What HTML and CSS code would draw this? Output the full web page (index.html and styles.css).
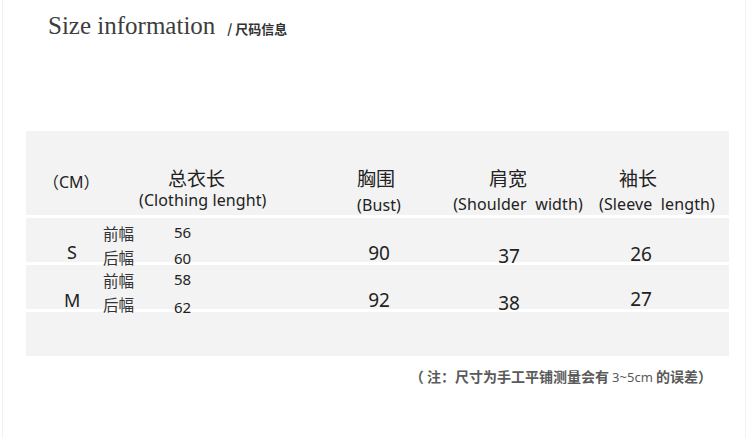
FILE: index.html
```html
<!DOCTYPE html>
<html lang="zh">
<head>
<meta charset="utf-8">
<title>Size information</title>
<link rel="stylesheet" href="styles.css">
</head>
<body>
<div class="page">
  <header class="title">
    <span class="title-en">Size information</span>
    <span class="title-cn">/ 尺码信息</span>
  </header>

  <section class="panel">
    <div class="row row-head">
      <div class="cell unit">（CM）</div>
      <div class="cell head head-length">
        <span class="cn">总衣长</span>
        <span class="en">(Clothing lenght)</span>
      </div>
      <div class="cell head head-bust">
        <span class="cn">胸围</span>
        <span class="en">(Bust)</span>
      </div>
      <div class="cell head head-center head-shoulder">
        <span class="cn">肩宽</span>
        <span class="en">(Shoulder&nbsp; width)</span>
      </div>
      <div class="cell head head-center head-sleeve">
        <span class="cn">袖长</span>
        <span class="en">(Sleeve&nbsp; length)</span>
      </div>
    </div>

    <div class="row">
      <div class="cell size size-s">S</div>
      <div class="cell labels"><span>前幅</span><span>后幅</span></div>
      <div class="cell pair"><span>56</span><span>60</span></div>
      <div class="cell num bust">90</div>
      <div class="cell num shoulder low">37</div>
      <div class="cell num sleeve mid">26</div>
      <div class="cell"></div>
    </div>

    <div class="row">
      <div class="cell size size-m">M</div>
      <div class="cell labels"><span>前幅</span><span>后幅</span></div>
      <div class="cell pair"><span>58</span><span class="drop">62</span></div>
      <div class="cell num bust">92</div>
      <div class="cell num shoulder low">38</div>
      <div class="cell num sleeve high">27</div>
      <div class="cell"></div>
    </div>

    <div class="row row-empty"></div>
  </section>

  <p class="note">（ 注：尺寸为手工平铺测量会有 <span class="note-num">3~5cm</span> 的误差）</p>
</div>
</body>
</html>
```

FILE: styles.css
```css
html, body {
  margin: 0;
  padding: 0;
  background: #ffffff;
}

body {
  width: 750px;
  height: 438px;
  overflow: hidden;
  font-family: "Noto Sans", "Noto Sans CJK SC", sans-serif;
  color: #222;
}

.page {
  height: 438px;
  box-sizing: border-box;
  margin-left: 2px;
  width: 744px;
  border-left: 1px solid #f1f1f1;
  border-right: 1px solid #f1f1f1;
  padding: 11px 0 0 23px;
}

.title {
  display: flex;
  align-items: baseline;
  gap: 12px;
  height: 120px;
  padding-left: 22px;
}

.title-en {
  font-family: "Liberation Serif", "DejaVu Serif", serif;
  font-size: 25px;
  color: #3d3d3d;
  line-height: 30px;
}

.title-cn {
  font-family: "Noto Sans CJK SC", sans-serif;
  font-weight: 700;
  font-size: 13px;
  color: #333;
}

.panel {
  width: 703px;
  display: flex;
  flex-direction: column;
  gap: 3px;
}

.row {
  display: grid;
  grid-template-columns: 74px 66px 154px 120px 138px 126px 1fr;
  height: 44px;
  background: #f3f3f3;
}

.row-head {
  height: 84px;
}

.cell {
  white-space: nowrap;
  position: relative;
  z-index: 1;
}

/* header */
.unit {
  font-size: 16px;
  padding: 41px 0 0 17px;
  line-height: 20px;
  color: #222;
}

.head {
  display: flex;
  flex-direction: column;
}

.head .cn {
  font-family: "Noto Sans CJK SC", sans-serif;
  font-size: 19px;
  line-height: 24px;
}

.head .en {
  font-size: 16px;
  line-height: 20px;
  letter-spacing: 0.1px;
}

.head-length {
  grid-column: 2 / 4;
  align-items: flex-start;
  padding: 35px 0 0 39px;
}

.head-length .cn {
  margin-left: 29px;
}

.head-bust {
  padding: 35px 0 0 37px;
}

.head-bust .en {
  margin-top: 5px;
}

.head-center {
  align-items: center;
  padding-top: 35px;
}

.head-center .en {
  margin-top: 4px;
}

.head-shoulder {
  transform: translateX(9px);
}

.head-shoulder .cn {
  margin-right: 20px;
}

.head-sleeve {
  transform: translateX(16px);
}

.head-sleeve .cn {
  margin-right: 38px;
}

/* body rows */
.size {
  font-size: 18px;
  line-height: 24px;
  padding-top: 22px;
}

.size-s {
  padding-left: 41px;
}

.size-m {
  padding-left: 38px;
  padding-top: 23px;
}

.labels {
  display: flex;
  flex-direction: column;
  padding: 3px 0 0 3px;
  font-family: "Noto Sans CJK SC", sans-serif;
  font-size: 15.5px;
  line-height: 24px;
  color: #333;
}

.pair {
  display: flex;
  flex-direction: column;
  padding: 1px 0 0 8px;
  font-size: 15px;
  line-height: 26px;
}

.pair .drop {
  position: relative;
  top: 2px;
}

.num {
  text-align: center;
  font-size: 19px;
  line-height: 24px;
  padding-top: 23px;
}

.num.low {
  padding-top: 26px;
}

.num.mid {
  padding-top: 24px;
}

.num.high {
  padding-top: 22px;
}

.bust {
  padding-right: 12px;
  padding-left: 10px;
}

.row-empty {
  height: 44px;
}

.note {
  margin: 0;
  padding: 10px 17px 0 0;
  width: 703px;
  box-sizing: border-box;
  text-align: right;
  font-family: "Noto Sans CJK SC", sans-serif;
  font-size: 14px;
  font-weight: 700;
  color: #5a5a5a;
  line-height: 20px;
}

.note-num {
  font-family: "Noto Sans", sans-serif;
  font-weight: 400;
  font-size: 13px;
}
```
